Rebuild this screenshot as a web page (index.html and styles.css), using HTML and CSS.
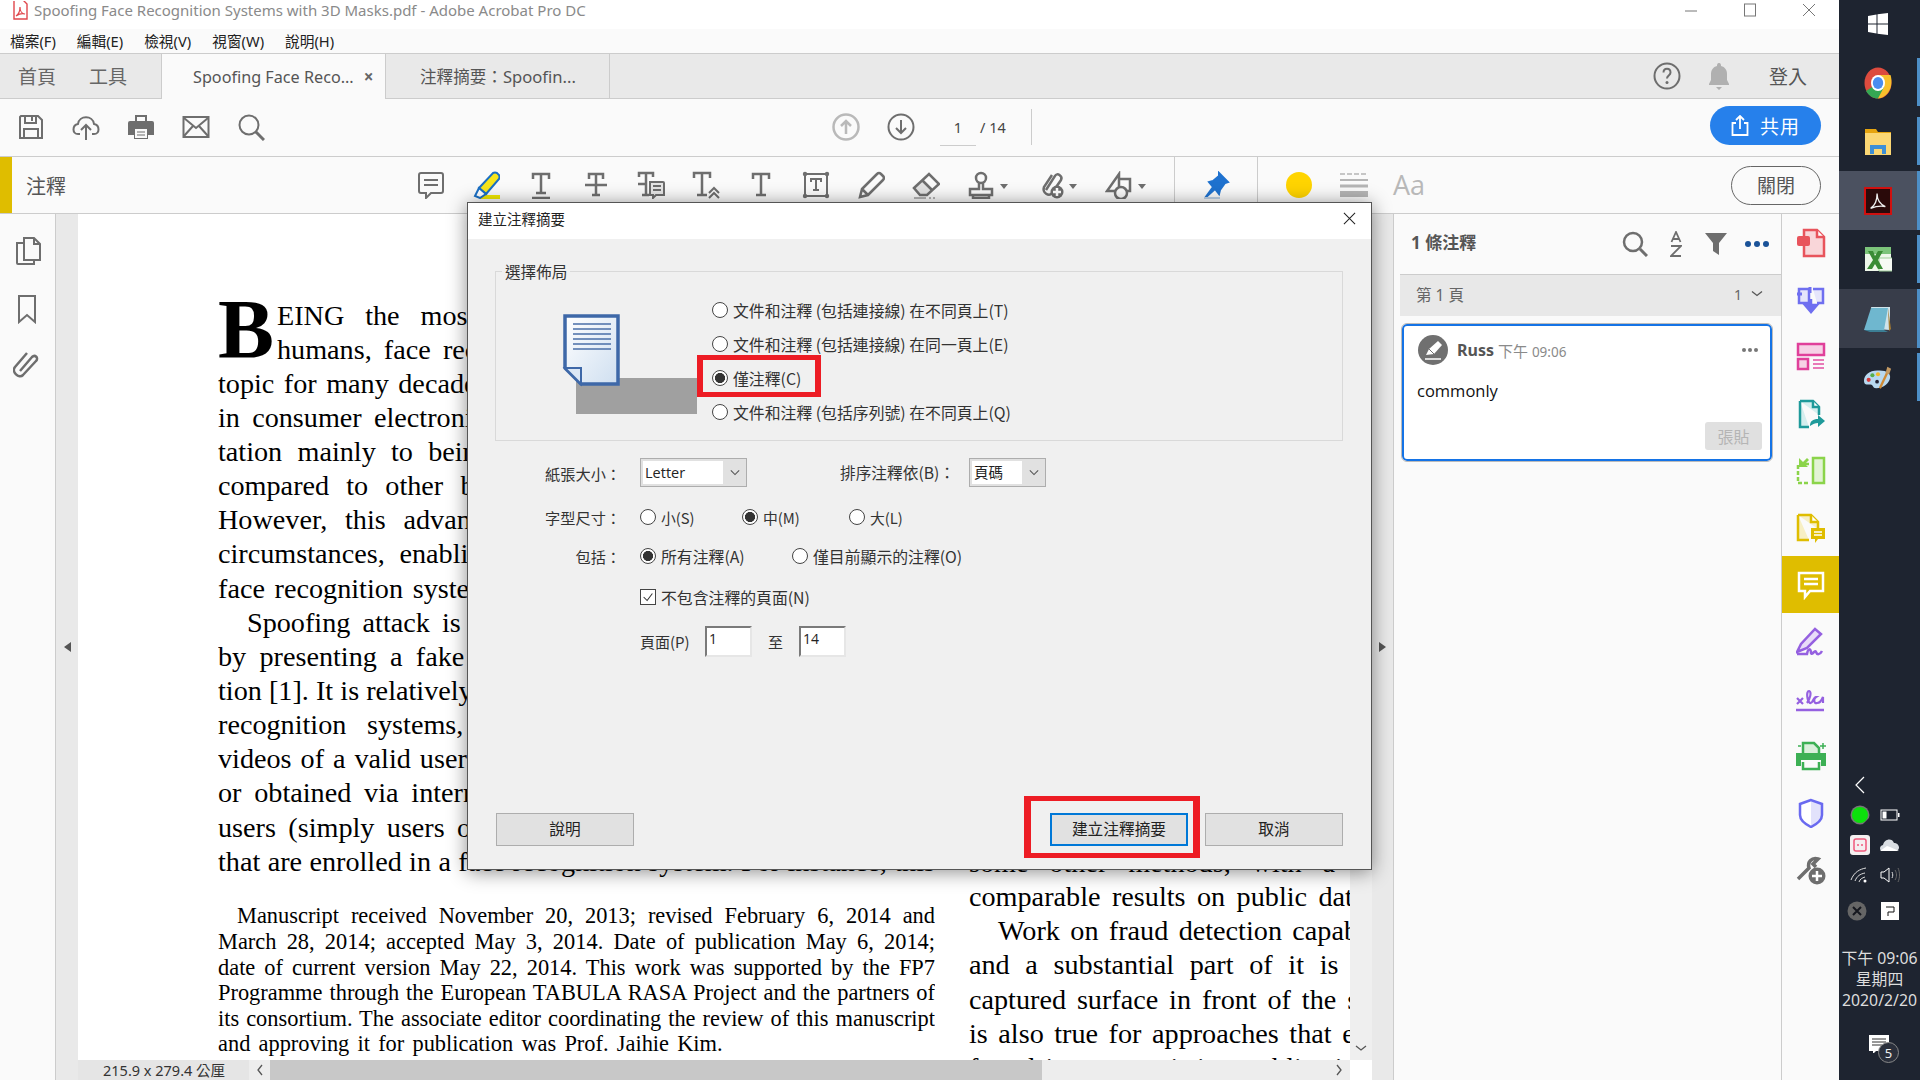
FILE: index.html
```html
<!DOCTYPE html>
<html lang="zh-Hant">
<head>
<meta charset="utf-8">
<title>Spoofing Face Recognition Systems with 3D Masks.pdf - Adobe Acrobat Pro DC</title>
<link rel="stylesheet" href="styles.css">
</head>
<body>
<div class="app">
  <header class="titlebar">
    <svg class="pdf-mini" viewBox="0 0 16 20"><path d="M2 -2h8l5 5v15H2z" fill="#fff" stroke="#e0474c" stroke-width="1.4"/><path d="M4 15c3-2 4-5 4-9 0 4 2 7 5 7-3-1-6 0-9 2z" fill="none" stroke="#e0474c" stroke-width="1.2"/></svg>
    <span class="title-text">Spoofing Face Recognition Systems with 3D Masks.pdf - Adobe Acrobat Pro DC</span>
    <div class="winctl">
      <svg viewBox="0 0 14 14"><path d="M1 8h12" class="w"/></svg>
      <svg viewBox="0 0 14 14"><rect x="1.5" y="1" width="11" height="12" class="w"/></svg>
      <svg viewBox="0 0 14 14"><path d="M1 1l12 12M13 1L1 13" class="w"/></svg>
    </div>
  </header>
  <nav class="menubar"><span>檔案(F)</span><span>編輯(E)</span><span>檢視(V)</span><span>視窗(W)</span><span>說明(H)</span></nav>
  <div class="tabbar">
    <div class="tab-home"><span>首頁</span><span>工具</span></div>
    <div class="tab active"><span>Spoofing Face Reco...</span><b class="tab-x">×</b></div>
    <div class="tab second"><span>注釋摘要：Spoofin...</span></div>
    <div class="tab-right">
      <svg class="ti" viewBox="0 0 28 32"><ellipse cx="14" cy="16" rx="12.5" ry="12.5" class="s"/><path d="M10.5 12.5c0-5 7-5 7 0 0 3-3.500 3-3.500 6" class="s"/><circle cx="14" cy="22.500" r="1.500" fill="#6e6e6e"/></svg>
      <svg class="ti" viewBox="0 0 28 32"><path d="M14 3c-2 0-2 2-2 3-4 1-6 4-6 8v6l-2 4v1h20v-1l-2-4v-6c0-4-2-7-6-8 0-1 0-3-2-3z M11 27h6l-3 3z" fill="#b0b0b0"/></svg>
      <span class="login">登入</span>
    </div>
  </div>
  <div class="toolbar">
    <svg class="i28" viewBox="0 0 28 28"><path d="M4 3h17l4 4v18H3V4z" class="s"/><path d="M8 3v7h11V3M15 4v4M7 25v-9h14v9" class="s"/></svg>
    <svg class="i28" viewBox="0 0 28 28"><path d="M8 21H6c-6 0-6-9 0-10 1-9 15-9 16 0 6 1 6 10 0 10h-2" class="s"/><path d="M14 27V12M9 17l5-5 5 5" class="s"/></svg>
    <svg class="i28" viewBox="0 0 28 28"><path d="M8 8V2h12v6h5a2 2 0 0 1 2 2v12h-6v4H7v-4H1V10a2 2 0 0 1 2-2z" fill="#6e6e6e"/><rect x="8" y="16" width="12" height="9" fill="#fafafa"/><path d="M10 19h8M10 22h8" class="s1"/><rect x="10" y="4" width="8" height="4" fill="#fafafa"/></svg>
    <svg class="i28" viewBox="0 0 28 28"><rect x="1.500" y="4" width="25" height="20" class="s"/><path d="M2 5l12 10L26 5M2 23l9-10M26 23l-9-10" class="s"/></svg>
    <svg class="i28" viewBox="0 0 28 28"><circle cx="12" cy="12" r="9.500" class="s"/><path d="M19 19l8 8" class="s3"/></svg>
    <div class="pager">
      <svg class="nav-ic" viewBox="0 0 28 28"><circle cx="14" cy="14" r="12.500" class="sl"/><path d="M14 21V8M9 13l5-5 5 5" class="sl"/></svg>
      <svg class="nav-ic" viewBox="0 0 28 28"><circle cx="14" cy="14" r="12.500" class="s"/><path d="M14 7v13M9 15l5 5 5-5" class="s"/></svg>
      <span class="page-no">1</span><span class="page-total">/ 14</span>
      <span class="vsep"></span>
    </div>
    <button class="share"><svg viewBox="0 0 18 22"><path d="M5 8H1.500v12h15V8H13M9 14V1M5 5l4-4 4 4" fill="none" stroke="#fff" stroke-width="1.800"/></svg>共用</button>
  </div>
  <div class="commentbar">
    <div class="cb-mark"></div>
    <span class="cb-title">注釋</span>
    <div class="cb-tools">
      <svg class="i28" viewBox="0 0 28 28"><path d="M4 2h20a2 2 0 0 1 2 2v16a2 2 0 0 1-2 2H14l-5 5v-5H4a2 2 0 0 1-2-2V4a2 2 0 0 1 2-2z" class="s"/><path d="M7 9h14M7 14h14" class="s"/></svg>
      <svg class="i28" viewBox="0 0 28 28"><rect x="8" y="24" width="20" height="7" fill="#f0e800"/><path d="M7 17L21 2q2-1 4 0l2 2q1 2 0 4L14 23z" fill="#f6e51c" stroke="#1a6fc4" stroke-width="2"/><path d="M7 17l-4 8 5 2 6-4z" fill="#fff" stroke="#1a6fc4" stroke-width="2"/></svg>
      <svg class="i28" viewBox="0 0 28 28"><path d="M6 8V3h16v5M14 3v19M9 22h10M5 27h18" class="s25"/></svg>
      <svg class="i28" viewBox="0 0 28 28"><path d="M7 8V3h14v5M14 3v21M10 24h8M3 14h22" class="s25"/></svg>
      <svg class="i28" viewBox="0 0 28 28"><path d="M2 6V2h14v4M9 2v22M5 24h7M1 13h8" class="s25"/><path d="M13 11h13a1 1 0 0 1 1 1v12H19l-3 3v-3h-3z" class="sf"/><path d="M16 15h8M16 19h8" class="s"/></svg>
      <svg class="i28" viewBox="0 0 28 28"><path d="M2 7V2h16v5M10 2v22M5 24h10" class="s25"/><path d="M17 22l5-5 5 5M17 27l5-5 5 5" class="s"/></svg>
      <svg class="i28" viewBox="0 0 28 28"><path d="M6 8V3h16v5M14 3v21M9 24h10" class="s25"/></svg>
      <svg class="i28" viewBox="0 0 28 28"><rect x="3" y="3" width="22" height="22" class="s"/><path d="M9 11V8h10v3M14 8v11M11 19h6" class="s"/><circle cx="3" cy="3" r="2.200" fill="#6e6e6e"/><circle cx="25" cy="3" r="2.200" fill="#6e6e6e"/><circle cx="3" cy="25" r="2.200" fill="#6e6e6e"/><circle cx="25" cy="25" r="2.200" fill="#6e6e6e"/></svg>
      <svg class="i28" viewBox="0 0 28 28"><path d="M3 26l2-8L20 3q2-2 4 0l2 2q2 2 0 4L11 24z M5 18l6 6" class="s25f"/></svg>
      <svg class="i28" viewBox="0 0 28 28"><path d="M11 10l9 9-5 5H8l-6-7z" fill="#e2e2e2"/><path d="M2 17L17 3l10 10-12 11H8zM10 9l10 10" class="s25"/><path d="M2 27h12M17 27h2M21 27h2" class="s1"/></svg>
      <svg class="i42" viewBox="0 0 42 28"><circle cx="14" cy="7" r="5" class="s25"/><path d="M12 12v6H3v6h22v-6h-9v-6M6 24v3h16v-3" class="s25"/><path d="M33 13h8l-4 5z" fill="#6e6e6e"/></svg>
      <svg class="i42" viewBox="0 0 42 28"><path d="M10 19L19 5c2-4 8 0 6 4l-9 13c-3 4-10 0-8-6l8-12" class="s25"/><circle cx="21" cy="21" r="6.500" fill="#6e6e6e"/><path d="M17 21h8M21 17v8" stroke="#fff" stroke-width="2.500"/><path d="M33 13h8l-4 5z" fill="#6e6e6e"/></svg>
      <svg class="i42" viewBox="0 0 42 28"><path d="M13 20H2L14 3v17M14 8h11v12h-4" class="s25"/><circle cx="16" cy="22" r="6" class="s25f"/><path d="M33 13h8l-4 5z" fill="#6e6e6e"/></svg>
      <span class="vsep2"></span>
      <svg class="i28" viewBox="0 0 28 28"><path d="M17 2l9 9-3 1-5 7-1 4-4-5-10 9 8-11-4-5 4-1 6-5z" fill="#1f72cf" stroke="#1f72cf" stroke-width="2"/><rect x="2" y="26" width="16" height="2" fill="#bcd0e6"/></svg>
      <span class="vsep2"></span>
      <svg class="i28" viewBox="0 0 28 28"><circle cx="14" cy="14" r="13" fill="#ffd400"/></svg>
      <svg class="i28" viewBox="0 0 28 28"><path d="M0 3h28" stroke="#b5b5b5" stroke-width="1.500" stroke-dasharray="5 2"/><path d="M0 9h28" stroke="#b5b5b5" stroke-width="2"/><path d="M0 15h28" stroke="#b5b5b5" stroke-width="3"/><path d="M1 23h26" stroke="#b5b5b5" stroke-width="6" stroke-linecap="round"/></svg>
      <span class="aa">Aa</span>
    </div>
    <button class="closebtn">關閉</button>
  </div>
  <main class="workspace">
    <aside class="leftrail">
      <svg class="lr1" viewBox="0 0 26 30"><path d="M9 2h10l6 6v16H9z M19 2v6h6" class="s"/><path d="M9 7H2v20a1 1 0 0 0 1 1h16v-4" class="s"/></svg>
      <svg class="lr2" viewBox="0 0 20 30"><path d="M2 2h16v26l-8-7-8 7z" class="s"/></svg>
      <svg class="lr3" viewBox="0 0 28 28"><path d="M9 21L21 7c3-3 7 1 4 4L12 25c-4 4-12-3-8-8L16 3" class="s25" transform="translate(-2 0)"/></svg>
    </aside>
    <section class="docarea">
      <div class="gutter"><i class="tri-l"></i></div>
      <div class="doccol">
        <div class="page">
          <div class="col">
            <div class="ln cap-line"><b class="dropcap">B</b><span class="lnfill">EING the most natural way of identification amid</span></div>
            <div class="ln cap-line"><span class="lnfill">humans, face recognition has been a hot research areas</span></div>
            <div class="ln">topic for many decades. It has been widely used by personnel</div>
            <div class="ln">in consumer electronics and for access rights, its implemen-</div>
            <div class="ln">tation mainly to being less intrusive than others whenever</div>
            <div class="ln">compared to other biometric traits available to all of us.</div>
            <div class="ln">However, this advantage makes it weakest in almost all.</div>
            <div class="ln">circumstances, enabling attackers to defeat a given face id</div>
            <div class="ln">face recognition system with simple materials and some time.</div>
            <div class="ln indent">Spoofing attack is a direct attack on a biometric systems.</div>
            <div class="ln">by presenting a fake sample of a valid user to the acquisi-</div>
            <div class="ln">tion [1]. It is relatively easy and a serious threat to face systems</div>
            <div class="ln">recognition systems, since photographs and videos of a</div>
            <div class="ln">videos of a valid user can easily be downloaded from the web</div>
            <div class="ln">or obtained via internet by anyone who wish for imposters.</div>
            <div class="ln">users (simply users of a system are often called the clients)</div>
            <div class="ln">that are enrolled in a face recognition system. For instance, this a</div>
            <div class="small-block">
              <div class="ln2 indent2">Manuscript received November 20, 2013; revised February 6, 2014 and</div>
              <div class="ln2">March 28, 2014; accepted May 3, 2014. Date of publication May 6, 2014;</div>
              <div class="ln2">date of current version May 22, 2014. This work was supported by the FP7</div>
              <div class="ln2">Programme through the European TABULA RASA Project and the partners of</div>
              <div class="ln2">its consortium. The associate editor coordinating the review of this manuscript</div>
              <div class="ln2 last">and approving it for publication was Prof. Jaihie Kim.</div>
            </div>
          </div>
          <div class="col col-r">
            <div class="ln">some other methods, with a slight edge in their tests.</div>
            <div class="ln">comparable results on public databases, while many others a</div>
            <div class="ln indent">Work on fraud detection capabilities is extensive and older</div>
            <div class="ln">and a substantial part of it is based on the surfaces over</div>
            <div class="ln">captured surface in front of the sensor, which is a very good</div>
            <div class="ln">is also true for approaches that employ both 2D and 3D data</div>
            <div class="ln">found in most existing publications in the field of biometrics</div>
          </div>
        </div>
        <div class="statusbar">
          <span class="sizelbl">215.9 x 279.4 公厘</span>
          <span class="sb-arrow"><svg viewBox="0 0 8 12"><path d="M6 1L2 6l4 5" class="chev"/></svg></span>
          <span class="sb-thumb"></span>
          <span class="sb-track"><svg viewBox="0 0 8 12"><path d="M2 1l4 5-4 5" class="chev"/></svg></span>
        </div>
      </div>
      <div class="vscroll">
        <div class="vtrack"><svg viewBox="0 0 12 8"><path d="M1 2l5 4 5-4" class="chev"/></svg></div>
        <div class="vcorner"></div>
      </div>
      <div class="gutter"><i class="tri-r"></i></div>
    </section>
    <aside class="cpanel">
      <div class="cp-head">
        <span class="cp-title">1 條注釋</span>
        <svg class="cp-search" viewBox="0 0 26 26"><circle cx="11" cy="11" r="9" class="s25"/><path d="M18 18l7 7" class="s3"/></svg>
        <svg class="cp-az" viewBox="0 0 12 26"><path d="M1.500 11L6 1l4.500 10M3 8h6M1 15h10L1 25h10" fill="none" stroke="#6e6e6e" stroke-width="1.800"/></svg>
        <svg class="cp-filter" viewBox="0 0 22 22"><path d="M0 0h22l-8 10v12l-6-4v-8z" fill="#6e6e6e"/></svg>
        <span class="cp-dots"><i></i><i></i><i></i></span>
      </div>
      <div class="cp-section"><span>第 1 頁</span><span class="cp-count">1<svg viewBox="0 0 12 8"><path d="M1 1.500l5 4 5-4" class="chev"/></svg></span></div>
      <article class="card">
        <div class="card-head">
          <span class="avatar"><svg viewBox="0 0 30 30"><path d="M8 20l3-6 9-8 4 4-8 9z" fill="#fff"/><path d="M7 24h16" stroke="#fff" stroke-width="1.500"/><path d="M11 14l5 5" stroke="#707070" stroke-width="1"/></svg></span>
          <b class="who">Russ</b><span class="when">下午 <small>09:06</small></span>
          <span class="card-dots"><i></i><i></i><i></i></span>
        </div>
        <p class="body-text">commonly</p>
        <div class="card-foot"><button class="post">張貼</button></div>
      </article>
    </aside>
    <aside class="toolrail">
      <div class="tr"><svg viewBox="0 0 30 30"><path d="M8 2h13l7 7v19H8z" fill="#f9d6d9" stroke="#e8545c" stroke-width="2.500"/><path d="M21 2v7h7" fill="#fff" stroke="#e8545c" stroke-width="2.500"/><rect x="1" y="8" width="13" height="10" rx="2" fill="#e8545c"/></svg></div>
      <div class="tr"><svg viewBox="0 0 30 30"><path d="M3 4h10v14H3zM17 4h10v14h-6" fill="#e5e5fb" stroke="#6f6ff0" stroke-width="2.500"/><path d="M1 9h5M14 2v6" stroke="#6f6ff0" stroke-width="3"/><path d="M15 14v10M9 20h12l-6 7z" fill="#6f6ff0" stroke="#6f6ff0" stroke-width="2.500"/></svg></div>
      <div class="tr"><svg viewBox="0 0 30 30"><rect x="2" y="2" width="26" height="11" fill="#f6d2e6" stroke="#e0409a" stroke-width="2.500"/><rect x="2" y="17" width="10" height="10" fill="#f6d2e6" stroke="#e0409a" stroke-width="2.500"/><path d="M17 18h11M17 22h11M17 26h11" stroke="#e87ab8" stroke-width="1.800"/></svg></div>
      <div class="tr"><svg viewBox="0 0 30 30"><path d="M4 2h13l6 6v8M13 28H4V2" fill="#d5eeee" stroke="#1f9a9a" stroke-width="2.500"/><path d="M17 2v6h6" fill="#fff" stroke="#1f9a9a" stroke-width="2.500"/><path d="M14 27c0-5 3-7 8-7v-4l7 6-7 6v-4c-3 0-5 1-8 3z" fill="#1f9a9a"/></svg></div>
      <div class="tr"><svg viewBox="0 0 30 30"><rect x="17" y="2" width="11" height="25" fill="#e3f3d5" stroke="#8bd44a" stroke-width="2.500"/><path d="M13 8H2v19h11" fill="none" stroke="#8bd44a" stroke-width="2.500" stroke-dasharray="4 2"/><path d="M3 2v9h9l-3-3 4-4-2-2-4 4z" fill="#8bd44a"/></svg></div>
      <div class="tr"><svg viewBox="0 0 30 30"><path d="M2 2h13l7 7v7M13 27H2V2" fill="#f7efc4" stroke="#dfbd00" stroke-width="2.500"/><path d="M15 2v7h7" fill="#fff" stroke="#dfbd00" stroke-width="2.500"/><path d="M15 15h14v11h-7l-3 4v-4h-4z" fill="#dfbd00"/><path d="M18 19h8M18 22h8" stroke="#fff" stroke-width="1.500"/></svg></div>
      <div class="tr tr-active"><svg viewBox="0 0 30 30"><path d="M3 3h24v18H14l-5 6v-6H3z" fill="#dfbd00" stroke="#fff" stroke-width="2.500"/><path d="M8 9h14M8 14h14" stroke="#fff" stroke-width="2.500"/></svg></div>
      <div class="tr"><svg viewBox="0 0 30 30"><path d="M1 25l4-8L19 2l6 5-14 14z" fill="#e8dcf8" stroke="#9560e0" stroke-width="2.500"/><path d="M1 27h10c1-6 4-6 4-1 1 3 4-4 5-1 1 3 4 3 6-1" fill="none" stroke="#9560e0" stroke-width="2.500"/></svg></div>
      <div class="tr"><svg viewBox="0 0 30 30"><path d="M1 14l6 6M7 14l-6 6" stroke="#9560e0" stroke-width="2.200"/><path d="M11 19c3-4 5-11 2-12-3 0-2 10 1 12 3 1 3-6 6-6-3 2-2 7 1 6 2 0 4-1 6-6v6" fill="none" stroke="#9560e0" stroke-width="2.200"/><path d="M0 26h28" stroke="#9560e0" stroke-width="2.500"/></svg></div>
      <div class="tr"><svg viewBox="0 0 30 30"><path d="M7 14V2h11l5 5v7" fill="#d9efdb" stroke="#3cb054" stroke-width="2.500"/><path d="M4 12H0v13h5v-6h20v6h5V12z" fill="#3cb054"/><path d="M7 21v7h16v-7" fill="none" stroke="#3cb054" stroke-width="2.500"/><path d="M27 2v6M24 5h6M2 5h3" stroke="#3cb054" stroke-width="1.500"/></svg></div>
      <div class="tr"><svg viewBox="0 0 30 30"><path d="M15 2l-11 4v11c0 6 7 10 11 12z" fill="#fff"/><path d="M15 2l11 4v11c0 6-7 10-11 12z" fill="#e2e2fb"/><path d="M15 2L4 6v11c0 6 7 10 11 12 4-2 11-6 11-12V6z" fill="none" stroke="#6a6af0" stroke-width="2.500"/></svg></div>
      <div class="tr"><svg viewBox="0 0 30 30"><path d="M2 24L13 13c-2-6 3-11 9-9l-5 5 3 3" fill="none" stroke="#6e6e6e" stroke-width="3.500"/><circle cx="21" cy="21" r="8.500" fill="#6e6e6e"/><path d="M16 21h10M21 16v10" stroke="#fff" stroke-width="2.500"/></svg></div>
    </aside>
  </main>
</div>

<aside class="taskbar">
  <div class="tb-start"><svg viewBox="0 0 20 22"><path d="M0 3l8.500-1.500V10.500H0zM9.500 1.300L20 0v10.500H9.500zM0 11.500h8.500v9L0 19zM9.500 11.500H20V22L9.500 20.700z" fill="#fff"/></svg></div>
  <div class="tb-item run tall"><svg viewBox="0 0 28 32"><ellipse cx="14" cy="16" rx="13.500" ry="15.500" fill="#dd4b3e"/><path d="M14 16L2 24c3 5 7 7.500 12 7.500L22 20z" fill="#34a853"/><path d="M14 8h12.500C28 12 28 20 25 24c-2 4-6 7-11 7.500L20 20z" fill="#f9c02c"/><ellipse cx="14" cy="16" rx="7" ry="8" fill="#fff"/><ellipse cx="14" cy="16" rx="5.200" ry="6" fill="#4a8df0"/></svg></div>
  <div class="tb-item run"><svg viewBox="0 0 28 28"><path d="M1 1h11l2 3h13v3H1z" fill="#e6a40f"/><path d="M1 5h26v22H1z" fill="#fbd774"/><path d="M6 26v-9h16v9h-4v-5h-8v5z" fill="#3d8fd6"/></svg></div>
  <div class="tb-item run on"><span class="acro"><svg viewBox="0 0 26 26"><path d="M5 21c5-3 7-9 7-16 0 7 4 12 9 14-5-1-11 0-16 2z" fill="none" stroke="#eee" stroke-width="1.400"/></svg></span></div>
  <div class="tb-item run"><svg viewBox="0 0 28 28"><path d="M1 1h26v24H1z" fill="#eef7ea"/><path d="M1 1h26v7H1z" fill="#7cc47a"/><path d="M15 12h14v13H15z" fill="#f7faf5" stroke="#9fcf9b"/><path d="M4 5h5l2 5 3-5h5l-5 9 5 9h-5l-3-5-3 5H3l6-9z" fill="#3a8c35"/></svg></div>
  <div class="tb-item run on alt"><svg viewBox="0 0 28 28"><path d="M7 2h19v23L12 24z" fill="#cfe3ea"/><path d="M24 3l3 21-2 2z" fill="#a57c32"/><path d="M7 3h17l-4 22H0z" fill="#6fb7cf"/><path d="M0 25l20 0 4 2-18 0z" fill="#3c7f95"/></svg></div>
  <div class="tb-item run"><svg viewBox="0 0 30 28"><path d="M14 6C6 6 0 11 0 17c0 5 4 4 7 4 3 0 2 4 6 4 8 0 15-6 15-12S22 6 14 6z" fill="#b8d8ef"/><circle cx="5" cy="16" r="2.200" fill="#d63a3a"/><circle cx="9" cy="11" r="2.200" fill="#55b04a"/><circle cx="15" cy="10" r="2.200" fill="#f0b92a"/><circle cx="14" cy="18" r="2" fill="#223"/><path d="M17 25L25 8" stroke="#cf8a34" stroke-width="2.500"/><path d="M23 9l2-7 4 2-2 6z" fill="#c49a63"/></svg></div>
  <div class="tray">
    <span class="tray-chev"><svg viewBox="0 0 10 18"><path d="M9 1L1 9l8 8" fill="none" stroke="#fff" stroke-width="1.200"/></svg></span><span></span>
    <span><svg viewBox="0 0 20 20"><circle cx="10" cy="10" r="9.500" fill="#777"/><circle cx="10" cy="10" r="8" fill="#0ce00c"/><path d="M20 12l-7 7 2 2 6-4z" fill="#1e2430"/></svg></span>
    <span><svg viewBox="0 0 20 12" class="batt"><rect x="1" y="1" width="16" height="10" fill="none" stroke="#fff"/><rect x="2.500" y="2.500" width="4" height="7" fill="#fff"/><rect x="18" y="4" width="1.500" height="4" fill="#fff"/></svg></span>
    <span><svg viewBox="0 0 20 20"><rect width="20" height="20" rx="3" fill="#f5f0f0"/><path d="M4 6a2 2 0 0 1 2-2h8M16 14a2 2 0 0 1-2 2H6M4 6v8a2 2 0 0 0 2 2M16 14V6a2 2 0 0 0-2-2" fill="none" stroke="#ef5a7c" stroke-width="1.500"/><path d="M8 9v2M12 9v2" stroke="#ef5a7c" stroke-width="1.500"/></svg></span>
    <span><svg viewBox="0 0 20 14" class="cloud"><path d="M3 13c-4 0-4-5 0-6 1-6 9-8 11-2 6 0 7 8 1 8z" fill="#d9dde2"/><path d="M0 13l7-5 3 1 9 4z" fill="#fff"/></svg></span>
    <span><svg viewBox="0 0 20 18"><path d="M1 14C4 6 10 3 16 2M5 15c2-5 5-7 10-8M9 16c1-3 3-4 6-5" fill="none" stroke="#ddd" stroke-width="1"/><circle cx="15" cy="15" r="1.500" fill="#fff"/></svg></span>
    <span><svg viewBox="0 0 20 18" class="spk"><path d="M1 6h3l5-4v14l-5-4H1z" fill="none" stroke="#fff"/><path d="M12 6c1 2 1 4 0 6" fill="none" stroke="#ddd"/><path d="M15 4c2 3 2 7 0 10M18 2c2 4 2 10 0 14" fill="none" stroke="#666"/></svg></span>
    <span class="tray-gap"><svg viewBox="0 0 20 20" class="nudge"><circle cx="10" cy="10" r="9.500" fill="#666"/><path d="M6 6l8 8M14 6l-8 8" stroke="#16181f" stroke-width="2"/></svg></span>
    <span class="tray-gap"><span class="wbox"><svg viewBox="0 0 12 12"><path d="M2 2h8v5H4v4" fill="none" stroke="#111" stroke-width="1"/></svg></span></span>
  </div>
  <div class="clock">下午 09:06<br>星期四<br>2020/2/20</div>
  <div class="notif"><svg viewBox="0 0 20 18"><path d="M0 0h20v16H7l-3 3v-3H0z" fill="#fff"/><path d="M3 4h14M3 7h14M3 10h10" stroke="#333"/></svg><span class="notif-n">5</span></div>
</aside>

<div class="dialog">
  <div class="dlg-title"><span>建立注釋摘要</span><svg viewBox="0 0 14 14"><path d="M1 1l12 12M13 1L1 13" stroke="#222" stroke-width="1.100" fill="none"/></svg></div>
  <div class="dlg-body">
    <fieldset class="group">
      <legend>選擇佈局</legend>
      <svg class="art" viewBox="0 0 216 130">
        <defs><linearGradient id="pg" x1="0" y1="0" x2="1" y2="1"><stop offset="0" stop-color="#fff"/><stop offset="1" stop-color="#cfdff0"/></linearGradient></defs>
        <rect x="80" y="85" width="121" height="36" fill="#a0a0a0"/>
        <path d="M69 23h53v68H85L69 75z" fill="url(#pg)" stroke="#3e68a8" stroke-width="3.500"/>
        <path d="M69 75h16v16z" fill="#dbe7f5" stroke="#3e68a8" stroke-width="2"/>
        <path d="M77 31h38M77 36h38M77 41h38M77 46h38M77 51h38M77 56h38" stroke="#4a6fa8" stroke-width="1.500"/>
      </svg>
      <div class="layout-opts">
        <label class="opt"><input type="radio" name="lay"><span>文件和注釋 (包括連接線) 在不同頁上(T)</span></label>
        <label class="opt"><input type="radio" name="lay"><span>文件和注釋 (包括連接線) 在同一頁上(E)</span></label>
        <label class="opt marked"><input type="radio" name="lay" checked><span>僅注釋(C)</span><i class="redbox"></i></label>
        <label class="opt"><input type="radio" name="lay"><span>文件和注釋 (包括序列號) 在不同頁上(Q)</span></label>
      </div>
    </fieldset>
    <div class="frow r-paper">
      <span class="flabel">紙張大小：</span>
      <div class="sel sel-a"><span class="sel-v">Letter</span><span class="sel-b"><svg viewBox="0 0 12 8"><path d="M1 1.500l5 5 5-5" class="chev"/></svg></span></div>
      <span class="flabel2">排序注釋依(B)：</span>
      <div class="sel sel-b2"><span class="sel-v">頁碼</span><span class="sel-b"><svg viewBox="0 0 12 8"><path d="M1 1.500l5 5 5-5" class="chev"/></svg></span></div>
    </div>
    <div class="frow r-font">
      <span class="flabel">字型尺寸：</span>
      <div class="optgrid g-font">
        <label class="opt"><input type="radio" name="fs"><span>小(S)</span></label>
        <label class="opt"><input type="radio" name="fs" checked><span>中(M)</span></label>
        <label class="opt"><input type="radio" name="fs"><span>大(L)</span></label>
      </div>
    </div>
    <div class="frow r-inc">
      <span class="flabel">包括：</span>
      <div class="optgrid g-inc">
        <label class="opt"><input type="radio" name="inc" checked><span>所有注釋(A)</span></label>
        <label class="opt"><input type="radio" name="inc"><span>僅目前顯示的注釋(O)</span></label>
      </div>
    </div>
    <div class="frow r-chk">
      <span class="flabel"></span>
      <label class="opt"><span class="chk"><svg viewBox="0 0 16 16"><path d="M3 8l4 4 6-8" fill="none" stroke="#333" stroke-width="1.200"/></svg></span><span>不包含注釋的頁面(N)</span></label>
    </div>
    <div class="frow r-page">
      <span class="flabel"></span>
      <span class="pg-lbl">頁面(P)</span><span class="pg-in">1</span><span class="pg-to">至</span><span class="pg-in">14</span>
    </div>
    <div class="dlg-btns">
      <button class="btn">說明</button>
      <span class="btn-space"></span>
      <button class="btn primary">建立注釋摘要<i class="redbox2"></i></button>
      <button class="btn">取消</button>
    </div>
  </div>
</div>
</body>
</html>
```
FILE: styles.css
```css
* { box-sizing: border-box; }
html, body { margin: 0; padding: 0; }
body {
  width: 1920px; height: 1080px; overflow: hidden; position: relative; display: flex;
  font-family: "Noto Sans", "Noto Sans CJK TC", sans-serif; color: #333; background: #fff;
}
button { font-family: inherit; cursor: default; }
svg { display: block; flex: none; }
.s { fill: none; stroke: #6e6e6e; stroke-width: 2; }
.s1 { fill: none; stroke: #6e6e6e; stroke-width: 1; }
.s3 { fill: none; stroke: #6e6e6e; stroke-width: 3; }
.s25 { fill: none; stroke: #6e6e6e; stroke-width: 2.5; }
.s25f { fill: #fafafa; stroke: #6e6e6e; stroke-width: 2.5; }
.sf { fill: #e6e6e6; stroke: #6e6e6e; stroke-width: 2; }
.sl { fill: none; stroke: #b9b9b9; stroke-width: 2.5; }
.w { fill: none; stroke: #777; stroke-width: 1; }
.chev { fill: none; stroke: #555; stroke-width: 1.3; }

.app { width: 1839px; height: 1080px; display: flex; flex-direction: column; flex: none; }

.titlebar { height: 29px; background: #fff; display: flex; align-items: center; padding-left: 12px; flex: none; }
.pdf-mini { width: 16px; height: 20px; margin-top: -8px; }
.title-text { margin-left: 6px; font-size: 15px; color: #8a8a8a; margin-top: -9px; white-space: nowrap; }
.winctl { margin-left: auto; display: flex; gap: 45px; margin-right: 23px; margin-top: -9px; }
.winctl svg { width: 14px; height: 14px; }

.menubar { height: 25px; background: #fafafa; display: flex; gap: 21px; padding: 0 0 2px 10px; align-items: center; font-size: 14.7px; color: #222; flex: none; border-bottom: 1px solid #ccc; }

.tabbar { height: 45px; background: #e9e9e9; display: flex; border-bottom: 1px solid #ccc; flex: none; }
.tab-home { width: 161px; display: flex; gap: 33px; padding-left: 18px; align-items: center; font-size: 19px; color: #666; }
.tab { width: 225px; display: flex; align-items: center; font-size: 16.2px; color: #555; border-right: 1px solid #ccc; white-space: nowrap; }
.tab.active { background: #fafafa; border-left: 1px solid #ccc; padding-left: 31px; height: 45px; }
.tab.second { width: 224px; padding-left: 34px; font-size: 16.6px; }
.tab-x { margin-left: 10px; font-size: 17px; color: #666; }
.tab-right { margin-left: auto; display: flex; align-items: center; padding-right: 32px; }
.ti { width: 28px; height: 32px; margin-right: 24px; }
.login { font-size: 19px; color: #555; margin-left: 12px; width: 38px; white-space: nowrap; }

.toolbar { height: 58px; background: #fafafa; display: flex; align-items: center; gap: 27px; padding: 0 18px 2px 17px; border-bottom: 1px solid #ccc; flex: none; }
.i28 { width: 28px; height: 28px; }
.i42 { width: 42px; height: 28px; }
.pager { display: flex; align-items: center; margin-left: 540px; height: 100%; }
.nav-ic { width: 28px; height: 28px; margin-right: 27px; }
.page-no { width: 36px; margin-left: -2px; height: 36px; border-bottom: 1px solid #ccc; font-size: 14.5px; color: #444; display: flex; align-items: center; justify-content: center; margin-top: 2px; }
.page-total { font-size: 14.5px; color: #444; margin-left: 4px; width: 51px; white-space: nowrap; }
.vsep { width: 1px; height: 36px; background: #ccc; }
.share { margin-left: auto; width: 111px; height: 39px; border: 0; border-radius: 20px; background: #2680eb; color: #fff; font-size: 19px; display: flex; align-items: center; justify-content: center; gap: 11px; margin-top: -2px; letter-spacing: 1px; }
.share svg { width: 18px; height: 22px; }

.commentbar { height: 57px; background: #fafafa; display: flex; align-items: center; border-bottom: 1px solid #ccc; padding-right: 18px; flex: none; position: relative; }
.cb-mark { width: 12px; align-self: stretch; background: #dfbd00; }
.cb-title { font-size: 20px; color: #555; margin-left: 14px; width: 391px; }
.cb-tools { display: flex; align-items: center; gap: 27px; height: 100%; }
.vsep2 { width: 1px; height: 100%; background: #ccc; }
.aa { font-size: 27px; color: #b8b8b8; font-family: "Open Sans", sans-serif; line-height: 28px; margin-left: -2px; }
.closebtn { margin-left: auto; width: 90px; height: 39px; border: 1.5px solid #666; border-radius: 20px; background: #fafafa; font-size: 19px; color: #555; font-weight: 400; }

.workspace { flex: 1; display: flex; min-height: 0; }
.leftrail { width: 56px; background: #fafafa; border-right: 1px solid #ccc; display: flex; flex-direction: column; align-items: flex-start; flex: none; padding: 22px 0 0 15px; }
.lr1 { width: 26px; height: 30px; }
.lr2 { width: 20px; height: 30px; margin: 28px 0 0 2px; }
.lr3 { width: 28px; height: 28px; margin: 26px 0 0 -2px; }

.docarea { width: 1337px; background: #e9e9e9; display: flex; flex: none; }
.gutter { flex: none; display: flex; align-items: center; justify-content: center; }
.gutter:first-child { width: 22px; }
.gutter:last-child { width: 21px; }
.tri-l { border: 5px solid transparent; border-right: 7px solid #555; border-left: 0; }
.tri-r { border: 5px solid transparent; border-left: 7px solid #555; border-right: 0; }
.doccol { width: 1272px; display: flex; flex-direction: column; flex: none; }
.page { flex: 1; background: #fff; overflow: hidden; display: flex; gap: 34px; padding: 84.5px 0 0 140px; font-family: "Liberation Serif", serif; color: #000; min-height: 0; }
.col { width: 717px; flex: none; }
.col-r { padding-top: 547.5px; }
.ln { height: 34.15px; line-height: 34.15px; font-size: 28.2px; text-align: justify; text-align-last: justify; overflow: hidden; }
.cap-line { overflow: visible; }
.lnfill { display: block; text-align: justify; text-align-last: justify; margin-left: 59px; height: 34.15px; overflow: hidden; }
.dropcap { float: left; font-size: 84px; line-height: 68px; height: 68px; width: 59px; margin-top: -3px; }
.indent { padding-left: 29px; }
.small-block { margin-top: 24.5px; }
.ln2 { height: 25.6px; line-height: 25.6px; font-size: 22.4px; text-align: justify; text-align-last: justify; overflow: hidden; }
.indent2 { padding-left: 19px; }
.ln2.last { text-align-last: left; word-spacing: 2.6px; }

.statusbar { height: 20px; display: flex; flex: none; background: #ededed; }
.sizelbl { width: 171px; background: #e5e5e5; font-size: 14.5px; color: #333; padding-left: 25px; line-height: 20px; white-space: nowrap; }
.sb-arrow { width: 21px; display: flex; align-items: center; justify-content: center; }
.sb-arrow svg, .sb-track svg { width: 8px; height: 12px; }
.sb-thumb { width: 772px; background: #c8c8c8; }
.sb-track { flex: 1; display: flex; align-items: center; justify-content: flex-end; padding-right: 7px; }
.vscroll { width: 22px; display: flex; flex-direction: column; flex: none; }
.vtrack { flex: 1; background: #efefef; display: flex; align-items: flex-end; justify-content: center; padding-bottom: 8px; }
.vtrack svg { width: 12px; height: 8px; }
.vcorner { height: 20px; background: #fff; }

.cpanel { width: 389px; background: #fafafa; border-left: 1px solid #ccc; border-right: 1px solid #ccc; flex: none; padding-left: 6px; }
.cp-head { height: 61px; display: flex; align-items: center; border-bottom: 1px solid #ccc; padding: 0 12px 0 11px; }
.cp-title { font-size: 17px; font-weight: 700; color: #555; width: 212px; margin-top: -5px; white-space: nowrap; }
.cp-search { width: 26px; height: 26px; margin-left: 1px; }
.cp-az { width: 12px; height: 26px; margin-left: 22px; }
.cp-filter { width: 22px; height: 22px; margin-left: 23px; }
.cp-dots { display: flex; gap: 3px; margin-left: 18px; }
.cp-dots i { width: 6px; height: 6px; border-radius: 50%; background: #1a5298; }
.cp-section { height: 41px; background: #e8e8e8; display: flex; align-items: center; justify-content: space-between; padding: 0 18px 3px 16px; font-size: 15.5px; color: #666; }
.cp-count { display: flex; align-items: center; gap: 9px; font-size: 14px; }
.cp-count svg { width: 12px; height: 8px; }
.card { margin: 8px 9px 0 2px; height: 137px; border: 2px solid #1473e6; border-radius: 5px; background: #fff; outline: 1px solid #bbb; padding: 9px 8px 0 14px; }
.card-head { display: flex; align-items: center; height: 30px; }
.avatar { width: 30px; height: 30px; border-radius: 50%; background: #707070; display: block; }
.avatar svg { width: 30px; height: 30px; }
.who { font-size: 16px; color: #555; margin-left: 9px; }
.when { font-size: 15px; color: #8a8a8a; margin-left: 4px; }
.when small { font-size: 13.5px; }
.card-dots { margin-left: auto; display: flex; gap: 2px; margin-right: 4px; }
.card-dots i { width: 4px; height: 4px; border-radius: 50%; background: #777; }
.body-text { margin: 14px 0 0 -1px; font-size: 16.5px; line-height: 24px; color: #111; font-family: "Open Sans", sans-serif; }
.card-foot { display: flex; justify-content: flex-end; margin-top: 19px; }
.post { width: 57px; height: 28px; border: 0; border-radius: 3px; background: #e0e0e0; color: #b5b5b5; font-size: 16px; padding: 0; }

.toolrail { width: 57px; background: #fafafa; flex: none; }
.tr { height: 57px; display: flex; align-items: center; justify-content: center; }
.tr svg { width: 30px; height: 30px; }
.tr-active { background: #dfbd00; }

.taskbar { width: 81px; height: 1080px; background: #1e2430; flex: none; display: flex; flex-direction: column; color: #e6e6e6; border-bottom: 6px solid #1e2430; }
.tb-start { height: 53px; display: flex; align-items: center; justify-content: center; padding-bottom: 6px; padding-right: 3px; flex: none; }
.tb-start svg { width: 20px; height: 22px; }
.tb-item { height: 59px; position: relative; display: flex; align-items: center; justify-content: center; flex: none; padding-right: 3px; }
.tb-item svg { width: 28px; height: 28px; }
.tb-item.tall svg { height: 32px; }
.tb-item.run::after { content: ""; position: absolute; right: 0; top: 5px; bottom: 6px; width: 3px; background: #4d8fc7; }
.tb-item.on { background: #4b5160; }
.tb-item.on.alt { background: #383d4a; }
.tb-item.on::after { top: 0; bottom: 0; }
.acro { width: 28px; height: 28px; background: #2a0a0a; border: 2px solid #d0100f; display: block; }
.acro svg { width: 24px; height: 24px; }
.tray { margin-top: auto; display: grid; grid-template-columns: 30px 30px; grid-auto-rows: 30px; margin-left: 6px; }
.tray > span { display: flex; align-items: center; justify-content: center; }
.tray svg { width: 20px; height: 20px; }
.tray .batt { width: 20px; height: 12px; }
.tray .cloud { width: 20px; height: 14px; }
.tray .spk { width: 20px; height: 18px; }
.tray .nudge { margin-right: 6px; }
.tray-chev svg { width: 10px !important; height: 18px !important; }
.tray-gap { margin-top: 11px; }
.wbox { width: 18px; height: 18px; background: #fff; display: block; padding: 3px; }
.wbox svg { width: 12px !important; height: 12px !important; }
.clock { margin-top: 28px; text-align: center; font-size: 15.8px; line-height: 21px; color: #ddd; white-space: nowrap; }
.notif { position: relative; height: 30px; margin: 20px 0 13px 30px; flex: none; }
.notif svg { width: 20px; height: 18px; margin-top: 4px; }
.notif-n { position: absolute; left: 9px; top: 11px; width: 21px; height: 21px; border-radius: 50%; background: #2a2f3b; border: 1px solid #888; font-size: 13px; color: #eee; display: flex; align-items: center; justify-content: center; }

.dialog { position: absolute; left: 467px; top: 202px; width: 905px; height: 668px; background: #f0f0f0; border: 1px solid #555; box-shadow: 0 2px 18px rgba(0,0,0,.45); display: flex; flex-direction: column; font-family: "Noto Sans CJK TC", "Noto Sans", sans-serif; font-size: 15.7px; color: #333; }
.dlg-title { height: 36px; background: #fff; display: flex; align-items: center; justify-content: space-between; padding: 0 15px 5px 10px; font-size: 14.5px; color: #222; flex: none; }
.dlg-title svg { width: 13px; height: 13px; }
.dlg-body { flex: 1; display: flex; flex-direction: column; padding: 22px 28px 23px; min-height: 0; }
.group { margin: 0 0 0 -1px; padding: 0; border: 1px solid #d9d9d9; height: 180px; display: flex; min-width: 0; }
.group legend { margin-left: 6px; padding: 0 3px; font-size: 15.6px; line-height: 20px; color: #333; }
.art { width: 216px; height: 130px; margin-top: 12px; }
.layout-opts { margin-top: 12px; display: flex; flex-direction: column; }
.opt { display: flex; align-items: center; gap: 5px; height: 34px; position: relative; white-space: nowrap; color: #333; font-size: 15.85px; }
.opt input { appearance: none; -webkit-appearance: none; margin: 0; width: 16px; height: 16px; border: 1px solid #444; border-radius: 50%; background: #fff; flex: none; }
.opt input:checked { background: radial-gradient(circle, #333 0 4.8px, #fff 5.3px); }
.redbox { position: absolute; left: -15px; top: -6px; width: 124px; height: 42px; border: 5px solid #ed1c24; border-left-width: 6px; border-right-width: 6px; }
.frow { display: flex; align-items: center; flex: none; }
.flabel { width: 125px; margin-right: 19px; text-align: right; white-space: nowrap; font-size: 15.2px; flex: none; }
.r-paper { margin-top: 17px; height: 29px; }
.sel { height: 29px; display: flex; border: 1px solid #adadad; background: #e1e1e1; flex: none; padding: 2px 0 2px 2px; }
.sel-a { width: 107px; }
.sel-b2 { width: 77px; }
.sel-v { flex: 1; background: #fff; line-height: 24px; padding-left: 2px; font-size: 14.5px; font-family: "Open Sans", "Noto Sans CJK TC", sans-serif; color: #222; }
.sel-b { width: 23px; display: flex; align-items: center; justify-content: center; }
.sel-b svg { width: 10px; height: 7px; }
.flabel2 { margin-left: 93px; width: 115px; margin-right: 14px; white-space: nowrap; font-size: 15.7px; flex: none; }
.r-font { margin-top: 15px; height: 30px; }
.r-inc { margin-top: 9px; height: 30px; }
.r-chk { margin-top: 11px; height: 30px; }
.optgrid { display: grid; }
.g-font { grid-template-columns: 102px 107px auto; }
.g-font .opt { font-size: 14.8px; }
.g-inc { grid-template-columns: 152px auto; }
.chk { width: 16px; height: 16px; border: 1px solid #444; background: #fff; flex: none; display: block; }
.chk svg { width: 14px; height: 14px; }
.r-page { margin-top: 14px; height: 31px; }
.pg-lbl { width: 65px; font-size: 15px; white-space: nowrap; flex: none; }
.pg-in { width: 47px; height: 31px; background: #fff; border: 2px solid; border-color: #7a7a7a #e6e6e6 #e6e6e6 #7a7a7a; font-size: 14px; line-height: 22px; padding-left: 2px; color: #222; font-family: "Open Sans", sans-serif; flex: none; }
.pg-to { width: 47px; text-align: center; font-size: 15px; flex: none; }
.dlg-btns { margin-top: auto; display: flex; gap: 17px; flex: none; }
.btn { width: 138px; height: 33px; background: #e1e1e1; border: 1px solid #adadad; font-size: 15.7px; line-height: 20px; color: #222; position: relative; padding: 0 0 2px; font-family: "Noto Sans CJK TC", sans-serif; }
.btn.primary { border: 2px solid #0078d7; }
.btn-space { flex: 1; }
.redbox2 { position: absolute; left: -28px; top: -19px; width: 176px; height: 62px; border: 5px solid #ed1c24; border-left-width: 7px; border-right-width: 7px; }
```
